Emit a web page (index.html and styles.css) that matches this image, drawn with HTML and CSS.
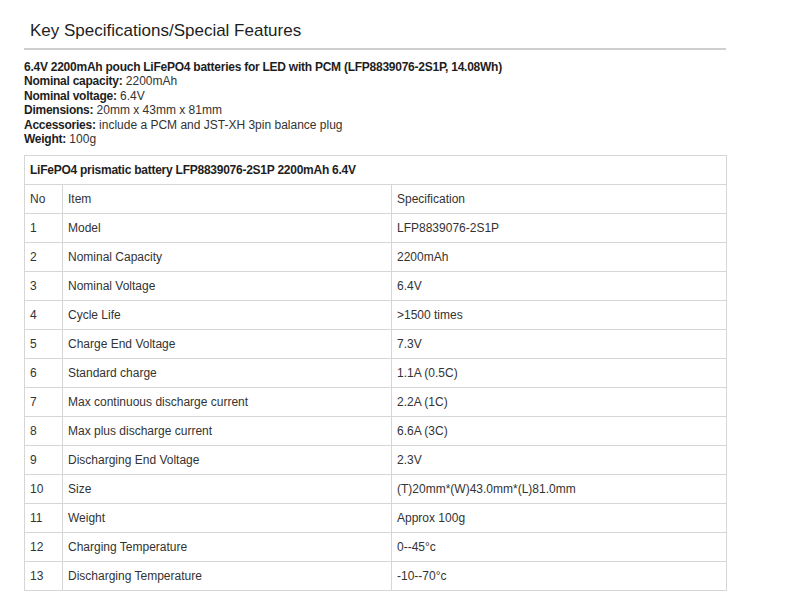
FILE: index.html
```html
<!DOCTYPE html>
<html>
<head>
<meta charset="utf-8">
<link rel="stylesheet" href="styles.css">
</head>
<body>
<div class="wrap">
  <h2 class="title">Key Specifications/Special Features</h2>
  <div class="intro">
    <div class="lead">6.4V 2200mAh pouch LiFePO4 batteries for LED with PCM (LFP8839076-2S1P, 14.08Wh)</div>
    <div><b>Nominal capacity:</b> 2200mAh</div>
    <div><b>Nominal voltage:</b> 6.4V</div>
    <div><b>Dimensions:</b> 20mm x 43mm x 81mm</div>
    <div><b>Accessories:</b> include a PCM and JST-XH 3pin balance plug</div>
    <div><b>Weight:</b> 100g</div>
  </div>
  <table class="spec">
    <colgroup>
      <col class="c-no">
      <col class="c-item">
      <col class="c-spec">
    </colgroup>
    <tr><td colspan="3" class="cap">LiFePO4 prismatic battery LFP8839076-2S1P 2200mAh 6.4V</td></tr>
    <tr><td>No</td><td>Item</td><td>Specification</td></tr>
    <tr><td>1</td><td>Model</td><td>LFP8839076-2S1P</td></tr>
    <tr><td>2</td><td>Nominal Capacity</td><td>2200mAh</td></tr>
    <tr><td>3</td><td>Nominal Voltage</td><td>6.4V</td></tr>
    <tr><td>4</td><td>Cycle Life</td><td>&gt;1500 times</td></tr>
    <tr><td>5</td><td>Charge End Voltage</td><td>7.3V</td></tr>
    <tr><td>6</td><td>Standard charge</td><td>1.1A (0.5C)</td></tr>
    <tr><td>7</td><td>Max continuous discharge current</td><td>2.2A (1C)</td></tr>
    <tr><td>8</td><td>Max plus discharge current</td><td>6.6A (3C)</td></tr>
    <tr><td>9</td><td>Discharging End Voltage</td><td>2.3V</td></tr>
    <tr><td>10</td><td>Size</td><td>(T)20mm*(W)43.0mm*(L)81.0mm</td></tr>
    <tr><td>11</td><td>Weight</td><td>Approx 100g</td></tr>
    <tr><td>12</td><td>Charging Temperature</td><td>0--45°c</td></tr>
    <tr><td>13</td><td>Discharging Temperature</td><td>-10--70°c</td></tr>
  </table>
</div>
</body>
</html>
```

FILE: styles.css
```css
html, body {
  margin: 0;
  padding: 0;
  background: #fff;
}
body {
  font-family: "Liberation Sans", Arial, sans-serif;
  color: #333;
}
.wrap {
  width: 702px;
  margin-left: 24px;
  padding-top: 21px;
}
.title {
  margin: 0;
  padding: 0 0 7px 6px;
  font-size: 17px;
  line-height: 20px;
  font-weight: normal;
  color: #1e1e1e;
  border-bottom: 2px solid #cfcfcf;
}
.intro {
  margin-top: 10px;
  font-size: 12px;
  line-height: 14.4px;
  color: #333;
}
.intro b, .lead {
  font-weight: bold;
  letter-spacing: -0.25px;
  color: #1e1e1e;
}
.spec {
  margin-top: 9px;
  width: 702px;
  border-collapse: collapse;
  table-layout: fixed;
  font-size: 12px;
  border: 1px solid #d6d6d6;
}
.c-no { width: 38px; }
.c-item { width: 329px; }
.c-spec { width: 335px; }
.spec td {
  border: 1px solid #d6d6d6;
  padding: 5px 5px;
  line-height: 18px;
  vertical-align: middle;
  color: #333;
}
.spec td.cap {
  font-weight: bold;
  letter-spacing: -0.25px;
  color: #1e1e1e;
}
```
